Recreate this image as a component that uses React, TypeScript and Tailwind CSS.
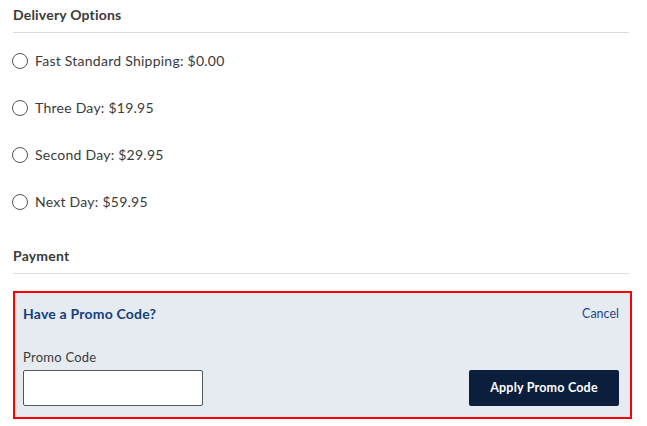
import { useState } from "react";

const options = [
  { id: "standard", label: "Fast Standard Shipping: $0.00" },
  { id: "three", label: "Three Day: $19.95" },
  { id: "second", label: "Second Day: $29.95" },
  { id: "next", label: "Next Day: $59.95" },
];

export default function App() {
  const [shipping, setShipping] = useState("");
  const [code, setCode] = useState("");

  return (
    <div className="min-h-screen bg-white pl-[13px] font-['Lato',sans-serif] text-[#333]">
      {/* Delivery Options */}
      <div className="w-[616px] border-b border-[#dcdcdc] pt-[5px] pb-[7px]">
        <h2 className="text-[14px] font-bold leading-[20px] tracking-[0.2px] text-[#3a3a3a]">Delivery Options</h2>
      </div>
      <div className="pt-[4px]">
        {options.map((o) => (
          <label key={o.id} className="flex h-[47px] cursor-pointer items-center">
            <input
              type="radio"
              name="shipping"
              value={o.id}
              checked={shipping === o.id}
              onChange={() => setShipping(o.id)}
              className="sr-only"
            />
            <span className="ml-[-1px] flex h-[16px] w-[16px] items-center justify-center rounded-full border border-[#555] bg-white">
              {shipping === o.id && <span className="h-[8px] w-[8px] rounded-full bg-[#0b1f3d]" />}
            </span>
            <span className="ml-[7px] text-[14px] leading-[20px] tracking-[0.25px] text-[#3a3a3a]">{o.label}</span>
          </label>
        ))}
      </div>

      {/* Payment */}
      <div className="mt-[21px] w-[616px] border-b border-[#dcdcdc] pb-[7px]">
        <h2 className="text-[14px] font-bold leading-[20px] tracking-[0.2px] text-[#3a3a3a]">Payment</h2>
      </div>

      {/* Promo code */}
      <div className="mt-[17px] w-[619px] border-2 border-[#ff0000] bg-[#e6ebf2] pt-[11px] pr-[11px] pb-[11px] pl-[8px]">
        <div className="flex items-center justify-between">
          <h3 className="text-[14px] font-bold leading-[20px] tracking-[0.2px] text-[#123f7a]">Have a Promo Code?</h3>
          <button className="text-[12.5px] leading-[20px] text-[#1d4a85]">Cancel</button>
        </div>
        <label htmlFor="promo" className="mt-[23px] block text-[13px] leading-[20px] tracking-[0.25px] text-[#3a3a3a]">
          Promo Code
        </label>
        <div className="mt-[3px] flex items-center justify-between">
          <input
            id="promo"
            value={code}
            onChange={(e) => setCode(e.target.value)}
            className="h-[36px] w-[180px] rounded-[2px] border border-[#555] bg-white px-2 text-[13px] outline-none"
          />
          <button className="h-[36px] w-[150px] rounded-[2px] bg-[#0b1f3d] text-[12.5px] font-bold tracking-[0.2px] text-white">
            Apply Promo Code
          </button>
        </div>
      </div>
    </div>
  );
}
